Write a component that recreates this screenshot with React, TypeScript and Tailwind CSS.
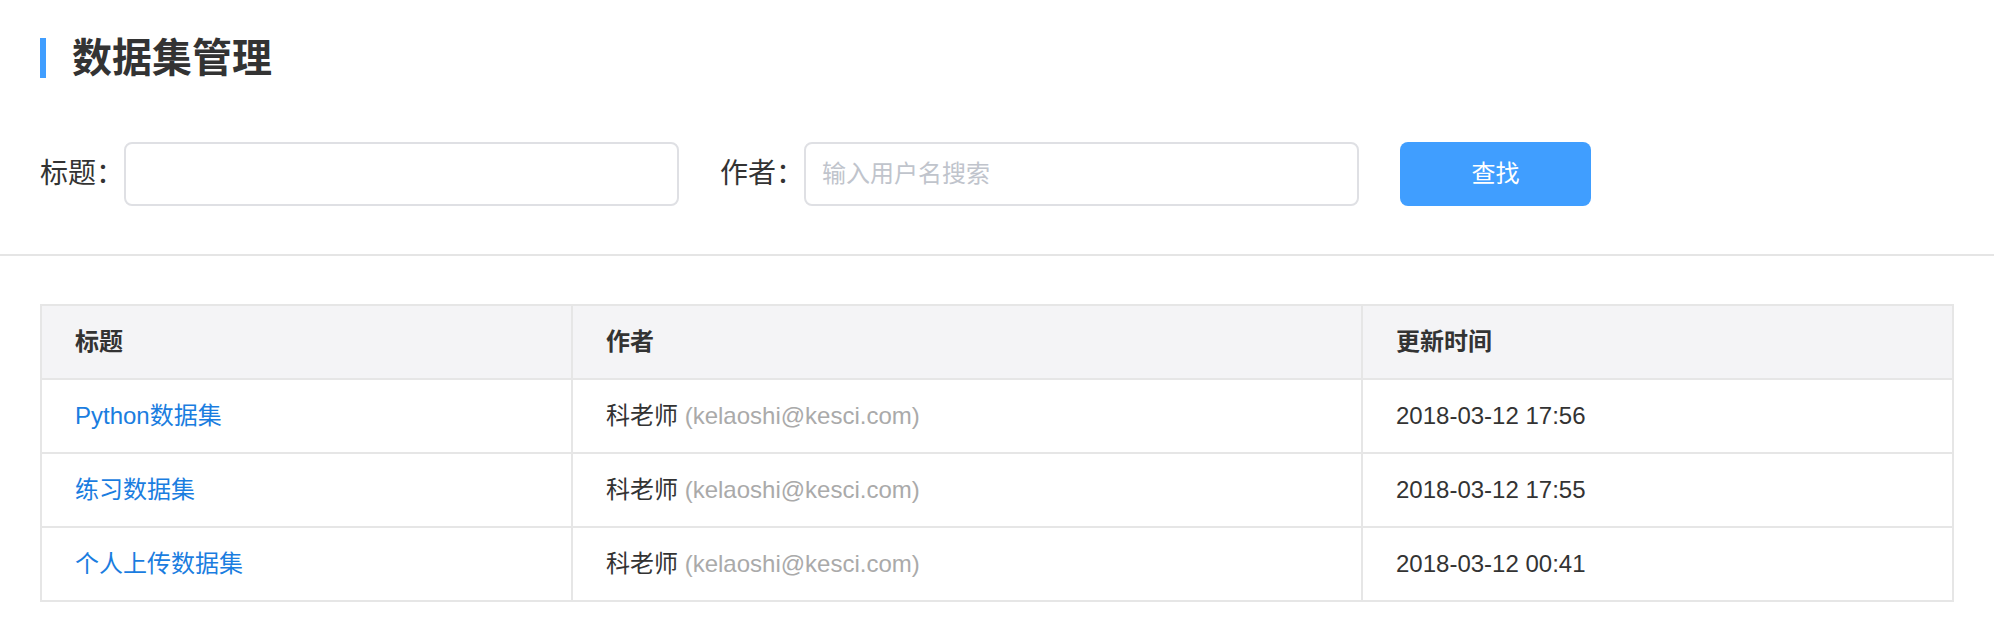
const rows = [
  { title: "Python数据集", author: "科老师", email: "kelaoshi@kesci.com", time: "2018-03-12 17:56" },
  { title: "练习数据集", author: "科老师", email: "kelaoshi@kesci.com", time: "2018-03-12 17:55" },
  { title: "个人上传数据集", author: "科老师", email: "kelaoshi@kesci.com", time: "2018-03-12 00:41" },
];

export default function App() {
  return (
    <div className="min-h-screen bg-white text-[#333] font-['Liberation_Sans','Noto_Sans_CJK_SC',sans-serif]">
      {/* Header + search form */}
      <div className="px-10 pt-[38px]">
        <h1 className="flex items-center h-10">
          <span className="w-[6px] h-10 bg-[#409eff]" />
          <span className="ml-[26px] text-[40px] leading-10 font-bold text-[#333]">
            数据集管理
          </span>
        </h1>

        <div className="flex items-center gap-[41px] mt-16 h-16">
          <div className="flex items-center">
            <label className="w-[84px] text-[28px] text-[#333]">标题：</label>
            <input
              type="text"
              className="w-[555px] h-16 border-2 border-[#dfe0e4] rounded-lg px-4 text-[24px] outline-none"
            />
          </div>
          <div className="flex items-center">
            <label className="w-[84px] text-[28px] text-[#333]">作者：</label>
            <input
              type="text"
              placeholder="输入用户名搜索"
              className="w-[555px] h-16 border-2 border-[#dfe0e4] rounded-lg px-4 text-[24px] outline-none placeholder:text-[#c0c4cc]"
            />
          </div>
          <button className="w-[191px] h-16 rounded-lg bg-[#409eff] text-white text-[24px]">
            查找
          </button>
        </div>
      </div>

      <div className="mt-12 h-[2px] bg-[#e5e5e5]" />

      {/* Dataset table */}
      <div className="px-10 pt-12">
        <table className="w-full table-fixed border-collapse border-2 border-[#e6e6e6] text-[24px]">
          <colgroup>
            <col className="w-[531px]" />
            <col className="w-[790px]" />
            <col />
          </colgroup>
          <thead>
            <tr className="bg-[#f4f4f6]">
              <th className="h-[74px] pl-[33px] text-left font-semibold text-[#333] border-2 border-[#e6e6e6]">标题</th>
              <th className="h-[74px] pl-[33px] text-left font-semibold text-[#333] border-2 border-[#e6e6e6]">作者</th>
              <th className="h-[74px] pl-[33px] text-left font-semibold text-[#333] border-2 border-[#e6e6e6]">更新时间</th>
            </tr>
          </thead>
          <tbody>
            {rows.map((row) => (
              <tr key={row.title}>
                <td className="h-[74px] pl-[33px] border-2 border-[#e6e6e6]">
                  <a href="#" className="text-[#1a7de0]">{row.title}</a>
                </td>
                <td className="h-[74px] pl-[33px] border-2 border-[#e6e6e6] text-[#333]">
                  {row.author} <span className="text-[#aaa]">({row.email})</span>
                </td>
                <td className="h-[74px] pl-[33px] border-2 border-[#e6e6e6] text-[#333]">{row.time}</td>
              </tr>
            ))}
          </tbody>
        </table>
      </div>
    </div>
  );
}
